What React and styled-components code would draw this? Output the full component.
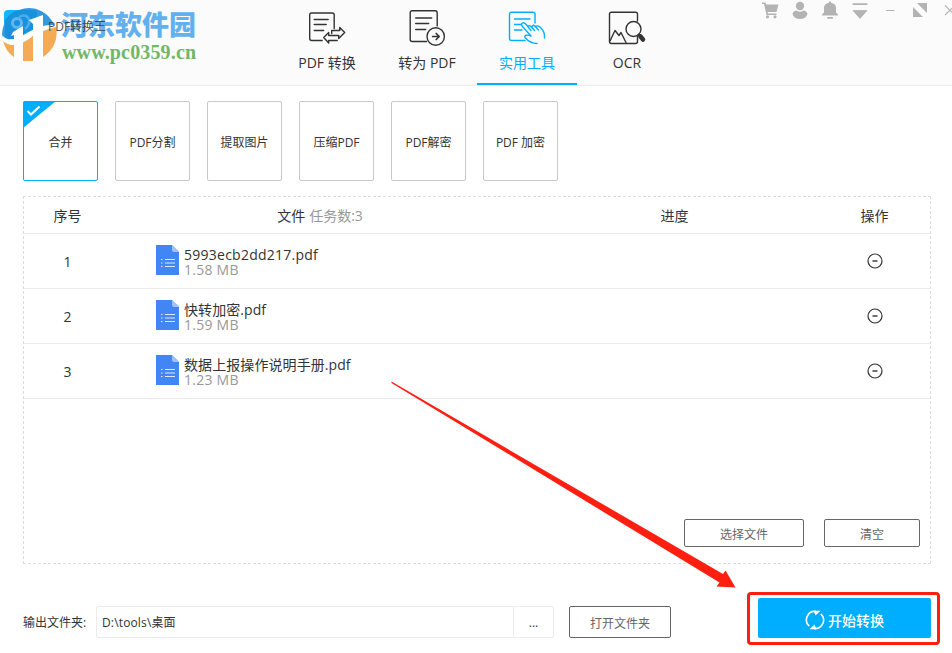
import React from "react";
import styled, { createGlobalStyle } from "styled-components";

const Global = createGlobalStyle`
  * { box-sizing: border-box; }
  html, body { margin: 0; padding: 0; background: #fff; overflow: hidden; }
  body { font-family: "Open Sans", "Noto Sans CJK SC", sans-serif; color: #333; font-size: 14px; }
  svg { display: block; flex: none; }
  button { font-family: inherit; padding: 0; }
`;

const Window = styled.div`
  position: relative;
  width: 952px;
  height: 653px;
  overflow: hidden;
  background: #fff;
`;
const Header = styled.header`
  display: flex;
  height: 86px;
  background: #fbfbfb;
  border-bottom: 1px solid #ececec;
`;
const Brand = styled.div`
  position: relative;
  width: 277px;
  padding: 18px 0 0 48px;
`;
const AppTitle = styled.div`
  position: relative;
  font-size: 12px;
  line-height: 18px;
  opacity: 0.85;
`;
const Watermark = styled.div`
  position: absolute;
  left: 0;
  top: 0;
  opacity: 0.93;
`;
const SiteName = styled.div`
  position: absolute;
  left: 61px;
  top: 8px;
  font-family: "Noto Sans CJK SC", sans-serif;
  font-weight: 900;
  font-size: 27px;
  line-height: 32px;
  white-space: nowrap;
  color: #58abee;
`;
const SiteUrl = styled.div`
  position: absolute;
  left: 62px;
  top: 40px;
  font: bold 20px/24px "Liberation Serif", serif;
  letter-spacing: 0.15px;
  color: #67b35b;
`;
const Tabs = styled.nav`
  display: flex;
`;
const Tab = styled.div`
  width: 100px;
  height: 85px;
  padding-top: 6px;
  display: flex;
  flex-direction: column;
  align-items: center;
  color: ${(p) => (p.$active ? "#00aeff" : "#333")};
  border-bottom: 2px solid ${(p) => (p.$active ? "#00aeff" : "transparent")};
`;
const TabLabel = styled.span`
  margin-top: 2px;
  font-size: 14px;
  line-height: 22px;
  white-space: nowrap;
`;
const WindowTools = styled.div`
  display: flex;
  margin-left: 83px;
  color: #b3b3b3;
`;
const ToolCards = styled.div`
  display: flex;
  gap: 17px;
  padding: 15px 0 0 23px;
`;
const Card = styled.div`
  position: relative;
  width: 75px;
  height: 80px;
  display: flex;
  align-items: center;
  justify-content: center;
  padding-top: 2px;
  font-size: 12px;
  white-space: nowrap;
  border: 1px solid ${(p) => (p.$active ? "#00aeff" : "#c8c8c8")};
  border-radius: 2px;
`;
const Selected = styled.svg`
  position: absolute;
  left: -1px;
  top: -1px;
`;
const Panel = styled.section`
  display: flex;
  flex-direction: column;
  width: 908px;
  height: 368px;
  margin: 15px 0 0 23px;
  border: 1px dashed #dcdcdc;
`;
const Row = styled.div`
  display: grid;
  grid-template-columns: 87px 418px 291px 109px;
  align-items: center;
  height: ${(p) => (p.$head ? "37px" : "55px")};
  border-bottom: 1px solid #ececec;
  line-height: 20px;
`;
const Cell = styled.div`
  display: flex;
  justify-content: center;
  padding-top: ${(p) => p.$drop || "0"};
`;
const Count = styled.span`
  color: #999;
  margin-left: 4px;
`;
const FileCell = styled.div`
  display: flex;
  align-items: center;
  padding-left: 45px;
  gap: 5px;
`;
const DocumentBadge = styled.span`
  margin-top: -2px;
`;
const FileInfo = styled.div`
  padding-top: 2px;
  line-height: 15px;
  white-space: nowrap;
`;
const FileName = styled.div`
  letter-spacing: ${(p) => (p.$latin ? "0.25px" : "0.08px")};
`;
const FileSize = styled.div`
  color: #999;
  letter-spacing: 0.25px;
`;
const PanelActions = styled.div`
  display: flex;
  justify-content: flex-end;
  gap: 20px;
  margin-top: auto;
  padding: 0 10px 16px 0;
`;
const OutlineButton = styled.button`
  width: ${(p) => p.$w}px;
  height: ${(p) => p.$h}px;
  padding-top: 3px;
  background: #fff;
  border: 1px solid #666;
  border-radius: 2px;
  color: #666;
  font-size: 12px;
  line-height: 18px;
`;
const Footer = styled.footer`
  display: flex;
  align-items: center;
  padding: 35px 0 0 23px;
  font-size: 12px;
`;
const FooterLabel = styled.span`
  width: 73px;
`;
const PathField = styled.div`
  display: flex;
  width: 458px;
  height: 32px;
  margin-right: 15px;
  border: 1px solid #ececec;
  border-radius: 2px;
  line-height: 31px;
`;
const PathText = styled.div`
  flex: 1;
  padding-left: 5px;
  letter-spacing: 0.15px;
`;
const Browse = styled.div`
  width: 40px;
  border-left: 1px solid #ececec;
  text-align: center;
`;
const Highlight = styled.div`
  display: flex;
  width: 193px;
  height: 53px;
  margin-left: 76px;
  margin-top: -7px;
  padding: 3px 0 0 8px;
  border: 3px solid #ff1f10;
  border-radius: 4px;
`;
const StartButton = styled.button`
  display: flex;
  align-items: center;
  justify-content: center;
  gap: 3px;
  width: 173px;
  height: 40px;
  padding-top: 3px;
  border: 0;
  border-radius: 2px;
  background: #00aeff;
  color: #fff;
  font-size: 14px;
  font-weight: 500;
`;
const Pointer = styled.svg`
  position: absolute;
  left: 380px;
  top: 375px;
`;

const Line = ({ children, x = 0 }) => (
  <svg width="40" height="44" viewBox={`${x} 0 40 44`} fill="none" stroke="currentColor" strokeWidth="1.4" strokeLinecap="round" strokeLinejoin="round">
    {children}
  </svg>
);

const ConvertIcon = () => (
  <Line x={-0.7}>
    <path d="M26.500 22.500V9Q26.500 7 24.500 7H4Q2 7 2 9V32.500Q2 34.500 4 34.500H14.500" />
    <path d="M6.500 13.500H20.500M6.500 18.500H18.500M6.500 24.500H16" />
    <path d="M16 31.500L21 26.500V29.500H31V32.500L37 26.500L32 21.500V24.500H24V27.500M16 31.500L21 37V34.500H29.500" />
  </Line>
);
const ToPdfIcon = () => (
  <Line x={-0.7}>
    <path d="M29.500 20V7Q29.500 4.700 27.500 4.700H4.500Q2.500 4.700 2.500 7V33.500Q2.500 35.500 4.500 35.500H19" />
    <path d="M8 12H24M8 17.500H21M8 23.500H18" />
    <circle cx="28" cy="30.500" r="8.700" />
    <path d="M25 30.500H31M28.500 27.500L31.500 30.500L28.500 33.500" strokeWidth="1.700" />
  </Line>
);
const ToolsIcon = () => (
  <Line>
    <path d="M28 17V8Q28 6.200 26 6.200H4.500Q2.500 6.200 2.500 8V32.500Q2.500 34.500 4.500 34.500H18" />
    <path d="M7.500 13H23M7.500 18.500H14M7.500 24H15" />
    <path d="M24 30L15.500 20.500Q13.700 18.200 15.300 17Q17 16 18.700 18L24 24.500M21 21Q21.500 18.500 24 20.500L27.500 24.500M25 21Q25.500 18.200 28 20L31.500 24M28.500 21Q30.500 18.500 33.500 21.500C37.500 25.500 37.500 28 37.500 32M24 30C20.500 28.500 17 29 18 31.500C21 35 24 37.500 30 37.500" />
  </Line>
);
const OcrIcon = () => (
  <Line>
    <path d="M30.500 15V8Q30.500 6.200 28.500 6.200H4.500Q2.500 6.200 2.500 8V35.500Q2.500 37.500 4.500 37.500H28.500Q30.500 37.500 30.500 35.500V30" />
    <path d="M3 35L8 24.500L12 29.500L14 26.500L19 36.500" />
    <circle cx="26.500" cy="23" r="7.500" fill="#fbfbfb" />
    <path d="M31.500 28L34 31" strokeWidth="2.500" strokeLinecap="butt" />
    <path d="M33.500 30.500L36 33.500" strokeWidth="4.500" />
  </Line>
);

const ToolIcons = () => (
  <svg width="192" height="24" viewBox="760 0 192 24" fill="currentColor" stroke="none">
    <path d="M762 2.500H765.300L766.300 4.500H778.500L776.500 12H767.500L768 13.500H776.500V15H766.500L764 4H762Z" />
    <circle cx="767.500" cy="16.800" r="1.600" /><circle cx="775" cy="16.800" r="1.600" />
    <circle cx="800" cy="6" r="4.200" />
    <path d="M792.500 14Q793 11 796.500 10.500Q800 13 803.500 10.500Q807 11 807.500 14Q806 19 800 19Q794 19 792.500 14Z" />
    <path d="M822 15.500V14.500L824 12.500V8Q824 3.500 829 2.700V1.500H831V2.700Q836 3.500 836 8V12.500L838 14.500V15.500Z" />
    <rect x="827" y="17" width="6" height="1.700" rx="0.800" />
    <rect x="852.500" y="3.200" width="15" height="1.800" rx="0.800" />
    <path d="M853 10.500H867L860 18.500Z" stroke="currentColor" strokeWidth="0.800" />
    <rect x="886" y="10" width="8.500" height="1" />
    <path d="M917 3H927V13ZM913 7L923 17H913Z" />
    <path d="M945 5.500L955 15M945 15L955 5.500" fill="none" stroke="currentColor" strokeWidth="1.100" />
  </svg>
);

const Logo = () => (
  <svg width="60" height="65" viewBox="0 0 60 65">
    <rect x="4" y="10" width="33" height="34" rx="4" fill="#00b2ff" />
    <path d="M2 34A27 27 0 0 1 54 25Q41 24 27 32Q14 40 8 43Q3 40 2 34Z" fill="#2492dc" />
    <path d="M5 39V20Q14 8 25 10H33Q37 10 37 14V28Q26 32 8 43Q5 42 5 39Z" fill="#078bdc" />
    <circle cx="17" cy="23" r="4.500" fill="none" stroke="#56b2ec" strokeWidth="3" />
    <path d="M19 17Q27 13 29 20Q30 25 25 29" fill="none" stroke="#3ea8ea" strokeWidth="2.500" />
    <path d="M3 40Q10 49 25 41Q38 31 56 27A28 28 0 0 1 43 57V38H33V61H23V50H14V57Q5 51 3 40Z" fill="#f5a449" />
    <path d="M3 36Q10 44 27 33Q42 24 55 26Q41 28 29 39Q13 50 3 41Z" fill="#fff" />
    <path d="M13 32L23 26V61H14V35L11 36ZM29 20L43 15V58L33 61V24Z" fill="#fff" />
  </svg>
);

const DocumentIcon = () => (
  <svg width="23" height="30" viewBox="0 0 23 30">
    <path d="M0 0H16L23 7V30H0Z" fill="#4285f4" />
    <path d="M16 0L23 7H18Q16 7 16 5Z" fill="#a1c2fa" />
    <path d="M9 14.500H19M9 18H19M9 21.500H19M5 14.500H6.500M5 18H6.500M5 21.500H6.500" stroke="#dce9ff" strokeWidth="1.200" />
  </svg>
);
const RemoveIcon = () => (
  <svg width="16" height="16" viewBox="0 0 16 16" fill="none" stroke="#333">
    <circle cx="8" cy="8" r="7" strokeWidth="1.200" />
    <path d="M5.500 8H10.500" strokeWidth="1.400" />
  </svg>
);
const RefreshIcon = () => (
  <svg width="20" height="20" viewBox="0 0 20 20" fill="none" stroke="#fff" strokeWidth="1.600">
    <path d="M4.200 16.200A8.500 8.500 0 0 1 11 1.500M15.800 3.800A8.500 8.500 0 0 1 9 18.500" />
    <path d="M8.500 0.700H15.500L10.500 5.500ZM11.500 19.300H4.500L9.500 14.500Z" fill="#fff" stroke="none" />
  </svg>
);

const tabs = [
  { label: "PDF 转换", Icon: ConvertIcon },
  { label: "转为 PDF", Icon: ToPdfIcon },
  { label: "实用工具", Icon: ToolsIcon, active: true },
  { label: "OCR", Icon: OcrIcon },
];
const cards = ["合并", "PDF分割", "提取图片", "压缩PDF", "PDF解密", "PDF 加密"];
const files = [
  { name: "5993ecb2dd217.pdf", size: "1.58 MB", latin: true },
  { name: "快转加密.pdf", size: "1.59 MB" },
  { name: "数据上报操作说明手册.pdf", size: "1.23 MB" },
];

export default function App() {
  return (
    <Window>
      <Global />
      <Header>
        <Brand>
          <Watermark>
            <Logo />
            <SiteName>河东软件园</SiteName>
            <SiteUrl>www.pc0359.cn</SiteUrl>
          </Watermark>
          <AppTitle>PDF转换王</AppTitle>
        </Brand>
        <Tabs>
          {tabs.map(({ label, Icon, active }) => (
            <Tab key={label} $active={active}>
              <Icon />
              <TabLabel>{label}</TabLabel>
            </Tab>
          ))}
        </Tabs>
        <WindowTools><ToolIcons /></WindowTools>
      </Header>
      <ToolCards>
        {cards.map((name, i) => (
          <Card key={name} $active={i === 0}>
            {i === 0 && (
              <Selected width="33" height="27" viewBox="0 0 33 27">
                <path d="M0 2Q0 0 2 0H33L0 27Z" fill="#00aeff" />
                <path d="M4.500 10L8 13.500L16.500 5.500" fill="none" stroke="#fff" strokeWidth="2" />
              </Selected>
            )}
            {name}
          </Card>
        ))}
      </ToolCards>
      <Panel>
        <Row $head>
          <Cell $drop="2px">序号</Cell>
          <Cell $drop="2px">文件<Count>任务数:3</Count></Cell>
          <Cell $drop="2px">进度</Cell>
          <Cell $drop="2px">操作</Cell>
        </Row>
        {files.map(({ name, size, latin }, i) => (
          <Row key={name}>
            <Cell $drop="2px">{i + 1}</Cell>
            <FileCell>
              <DocumentBadge><DocumentIcon /></DocumentBadge>
              <FileInfo>
                <FileName $latin={latin}>{name}</FileName>
                <FileSize>{size}</FileSize>
              </FileInfo>
            </FileCell>
            <Cell />
            <Cell><RemoveIcon /></Cell>
          </Row>
        ))}
        <PanelActions>
          <OutlineButton $w={120} $h={28}>选择文件</OutlineButton>
          <OutlineButton $w={96} $h={28}>清空</OutlineButton>
        </PanelActions>
      </Panel>
      <Footer>
        <FooterLabel>输出文件夹:</FooterLabel>
        <PathField>
          <PathText>D:\tools\桌面</PathText>
          <Browse>...</Browse>
        </PathField>
        <OutlineButton $w={102} $h={32}>打开文件夹</OutlineButton>
        <Highlight>
          <StartButton><RefreshIcon />开始转换</StartButton>
        </Highlight>
      </Footer>
      <Pointer width="360" height="220" viewBox="380 375 360 220">
        <path d="M391.500 381.500L723 574L725.500 570.500L735.500 587.500L716.500 586.500L719.500 582.500L391.500 383Z" fill="#ff1f10" />
      </Pointer>
    </Window>
  );
}
